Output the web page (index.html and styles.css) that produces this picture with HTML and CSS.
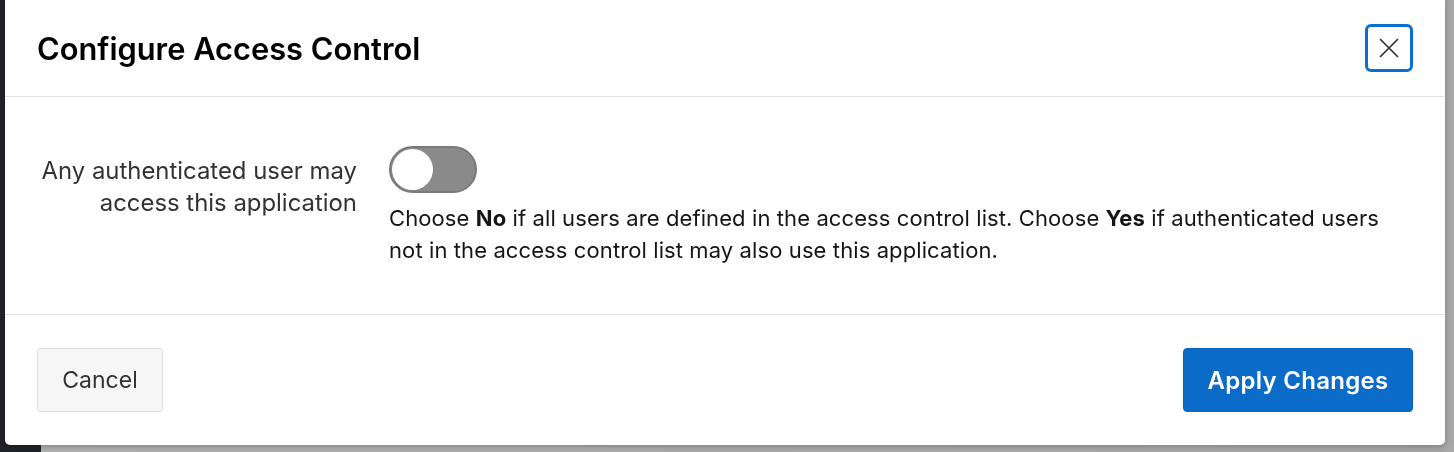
FILE: index.html
```html
<!DOCTYPE html>
<html lang="en">
<head>
<meta charset="utf-8">
<title>Configure Access Control</title>
<link rel="stylesheet" href="styles.css">
</head>
<body>
<div class="backdrop">
  <div class="sidebar"></div>
</div>
<div class="dialog" role="dialog" aria-labelledby="dlg-title">
  <header class="dialog-header">
    <h1 id="dlg-title" class="dialog-title">Configure Access Control</h1>
    <button class="close-btn" aria-label="Close">
      <svg width="22" height="22" viewBox="0 0 22 22" aria-hidden="true">
        <path d="M2 2 L20 20 M20 2 L2 20" stroke="#333" stroke-width="1.7" fill="none"/>
      </svg>
    </button>
  </header>
  <div class="dialog-body">
    <label class="field-label" for="any-auth">Any authenticated user may access this application</label>
    <div class="field-control">
      <span class="switch" id="any-auth" role="switch" aria-checked="false"><span class="knob"></span></span>
      <p class="help">Choose <b>No</b> if all users are defined in the access control list. Choose <b>Yes</b> if authenticated users not in the access control list may also use this application.</p>
    </div>
  </div>
  <footer class="dialog-footer">
    <button class="btn btn-cancel">Cancel</button>
    <button class="btn btn-primary">Apply Changes</button>
  </footer>
</div>
</body>
</html>
```

FILE: styles.css
```css
* { box-sizing: border-box; }
html, body {
  margin: 0;
  height: 100%;
}
body {
  background: #adadad;
  font-family: Inter, "Noto Sans", "Liberation Sans", sans-serif;
  color: #161513;
  overflow: hidden;
}
.backdrop {
  height: 100%;
  display: flex;
  background: linear-gradient(to right, #b3b3b3, #a8a8a8);
}
.sidebar {
  width: 41px;
  height: 100%;
  background: #1f2428;
}
.dialog {
  position: fixed;
  left: 5px;
  top: -6px;
  width: 1440px;
  height: 451px;
  background: #fff;
  border-radius: 5px;
  box-shadow: 0 2px 6px rgba(0,0,0,0.25);
  display: flex;
  flex-direction: column;
}
.dialog-header {
  height: 103px;
  flex: none;
  padding: 6px 32px 0 32px;
  display: flex;
  align-items: center;
  justify-content: space-between;
  border-bottom: 1px solid #e3e3e3;
}
.dialog-title {
  margin: 0;
  font-size: 30.8px;
  font-weight: 600;
  color: #000;
}
.close-btn {
  width: 48px;
  height: 48px;
  border: 3px solid #0b6fce;
  border-radius: 6px;
  background: #fff;
  display: flex;
  align-items: center;
  justify-content: center;
  padding: 0;
}
.dialog-body {
  flex: none;
  height: 218px;
  display: grid;
  grid-template-columns: 319px 1fr;
  column-gap: 32px;
  padding: 49px 33px 0 33px;
  border-bottom: 1px solid #e3e3e3;
}
.field-label {
  text-align: right;
  font-size: 23.9px;
  line-height: 32px;
  color: #333;
  padding-top: 9px;
}
.field-control {
  display: flex;
  flex-direction: column;
  align-items: flex-start;
}
.switch {
  width: 88px;
  height: 47px;
  border-radius: 24px;
  background: #8a8a8a;
  border: 2px solid #7a7a7a;
  display: flex;
  align-items: center;
  padding-left: 1px;
}
.knob {
  width: 41px;
  height: 41px;
  border-radius: 50%;
  background: #fff;
}
.help {
  margin: 9px 0 0 0;
  font-size: 22px;
  letter-spacing: 0.1px;
  line-height: 32px;
  color: #161513;
  max-width: 1000px;
}
.help b { font-weight: 700; }
.dialog-footer {
  flex: 1;
  padding: 33px 32px 0 32px;
  display: flex;
  justify-content: space-between;
  align-items: flex-start;
}
.btn {
  font-family: inherit;
  height: 64px;
  border-radius: 4px;
  cursor: pointer;
}
.btn-cancel {
  width: 126px;
  font-size: 23px;
  background: #f6f6f6;
  border: 1px solid #dcdcdc;
  color: #333;
}
.btn-primary {
  width: 230px;
  font-size: 24px;
  letter-spacing: 0.3px;
  background: #0a6bc9;
  border: 1px solid #0a64bd;
  color: #fff;
  font-weight: 600;
}
```
